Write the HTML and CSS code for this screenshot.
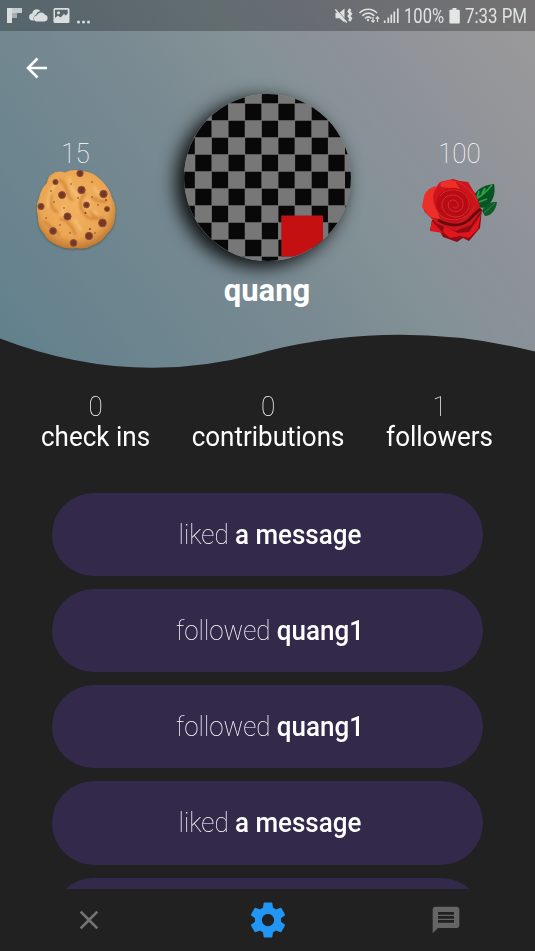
FILE: index.html
```html
<!DOCTYPE html>
<html lang="en">
<head>
<meta charset="utf-8">
<title>Profile</title>
<link rel="stylesheet" href="styles.css">
</head>
<body>
<div class="screen">
  <header class="hero">
    <div class="status">
      <svg class="status-left" width="96" height="31" viewBox="0 0 96 31" fill="#d9dedf">
        <path d="M7 8h5v15H7z"/><path d="M12 8h10v5H12z" opacity=".85"/><path d="M12 13h5v5h-5z" opacity=".6"/>
        <path d="M33 20.500a3.500 3.500 0 0 1-.7-7 4.500 4.500 0 0 1 8.200-2.300c-2.200.2-3.700 1.500-4.100 3.300-2 .5-3.300 2.400-2.500 6z"/>
        <path d="M37 21.500a3 3 0 0 1-.2-6 4.500 4.500 0 0 1 8.200-.7 3.400 3.400 0 0 1-.5 6.700z"/>
        <path fill-rule="evenodd" d="M55 8h13a1.500 1.500 0 0 1 1.500 1.500v12a1.500 1.500 0 0 1-1.500 1.500H55a1.500 1.500 0 0 1-1.500-1.500v-12A1.500 1.500 0 0 1 55 8zm0 1.700v8.300l3-2.500 2.500 2 3.500-3.500 1.800 1.500 1.900-2V9.700z"/>
        <circle cx="58.500" cy="12.800" r="1.500"/>
        <circle cx="78.500" cy="22" r="1.500"/><circle cx="83.500" cy="22" r="1.500"/><circle cx="88.500" cy="22" r="1.500"/>
      </svg>
      <div class="status-right">
        <svg width="66" height="31" viewBox="334 0 66 31" fill="none" stroke="#dfe1e1">
          <path d="M335.500 12.800h4l5-4.300v14l-5-4.300h-4z" fill="#dfe1e1" stroke="none"/>
          <path d="M336 8.500l11.500 13.500" stroke="#6b7073" stroke-width="1"/><path d="M335.300 9.500l11.500 13" stroke-width="1.500"/>
          <path d="M350.300 9l-1.500 2.500 2 2.300-2 2.300 2 2.300-1.500 2.600" stroke-width="2.600"/>
          <path d="M359.500 13c5-5 12.500-5 17.500 0M362.300 15.800c3.500-3.500 8.500-3.500 12 0M365 18.500c2-2 4.500-2 6.500 0" stroke-width="1.700"/>
          <circle cx="368" cy="20" r="1.200" fill="#dfe1e1" stroke="none"/>
          <path d="M373 17v5m-1.700-1.700l1.700 1.900 1.700-1.900M377.500 22v-5m-1.700 1.700l1.700-1.900 1.700 1.900" stroke-width="1.200"/>
          <path d="M384.700 20.500V23M388.300 17.500V23M391.300 14.500V23M394.300 11.500V23M397.800 8.500V23" stroke-width="1.700"/>
        </svg>
        <span class="battery-text">100%</span>
        <svg class="battery" width="11" height="31" viewBox="0 0 11 31" fill="#e4e6e6"><path d="M3.500 8h4v1.700H10q.8 0 .8.800v12q0 1-.8 1H1.200q-.8 0-.8-1v-12q0-.8.8-.8h2.300z"/></svg>
        <span class="clock">7:33 PM</span>
      </div>
    </div>

    <svg class="back" width="22" height="22" viewBox="0 0 22 22" fill="none" stroke="#fff" stroke-width="2.600"><path d="M21 11H2M11.500 1.500L2 11l9.500 9.500"/></svg>

    <div class="hero-row">
      <div class="score">
        <span class="score-value">15</span>
        <svg class="cookie" width="84" height="84" viewBox="34 168 84 84">
          <defs>
            <radialGradient id="dough" cx=".48" cy=".42" r=".6"><stop offset="0" stop-color="#f3b362"/><stop offset=".72" stop-color="#eba653"/><stop offset="1" stop-color="#bd7530"/></radialGradient>
            <filter id="soft"><feGaussianBlur stdDeviation="1.300"/></filter>
          </defs>
          <path d="M52 174q5-4 13-1.500 8-4 17-1.500 12 1 19 9 9 8 11 18 5 9 3 18 0 11-8 18-6 9-14 11-7 5-16 3-11 2-20-3-10-4-13-11-7-8-6-17-3-10 1-19 2-10 8-15 1-7 5-9z" fill="#45443c" opacity=".6" filter="url(#soft)" transform="translate(0 1)"/>
          <path d="M52 174q5-4 13-1.500 8-4 17-1.500 12 1 19 9 9 8 11 18 5 9 3 18 0 11-8 18-6 9-14 11-7 5-16 3-11 2-20-3-10-4-13-11-7-8-6-17-3-10 1-19 2-10 8-15 1-7 5-9z" fill="url(#dough)"/>
          <g fill="none" stroke="#c97d36" stroke-width="3" stroke-linecap="round" filter="url(#soft)" opacity=".65"><path d="M60 180c9 5 4 13 12 20M85 193q-8 10-2 19t13 6M51 195q-2 13 6 17M61 219q9 1 14 15M91 209q2 12 12 9M93 198q8 5 13 3M45 222l14 12"/></g>
          <g fill="none" stroke="#f7c984" stroke-width="3" stroke-linecap="round" filter="url(#soft)" opacity=".6"><path d="M55 185q-8 9-7 22M69 178q2 12 9 18M94 188l8 9M88 200q0 9 8 13M64 207q-5 10 4 9M75 220l6 10"/></g>
          <g fill="#743827" stroke="#945039" stroke-width="1"><circle cx="80" cy="173.500" r="3.200"/><circle cx="55.500" cy="182" r="2.600"/><circle cx="62" cy="195" r="3.500"/><circle cx="81.500" cy="190" r="3.700"/><circle cx="103.500" cy="194" r="3.700"/><circle cx="41" cy="206.500" r="3.100"/><circle cx="86.500" cy="205" r="2.900"/><circle cx="107" cy="209" r="2.500"/><circle cx="67.500" cy="216.500" r="3.600"/><circle cx="102.500" cy="223" r="3.900"/><circle cx="53" cy="231" r="3.400"/><circle cx="89" cy="236" r="3.700"/><circle cx="73.500" cy="243" r="3.400"/></g>
          <g fill="#7a4529"><circle cx="71" cy="184" r=".8"/><circle cx="92" cy="182" r=".8"/><circle cx="78" cy="198" r=".8"/><circle cx="51" cy="191" r=".8"/><circle cx="54" cy="202" r=".8"/><circle cx="92" cy="197" r=".8"/><circle cx="85.500" cy="213" r="1"/><circle cx="60" cy="225" r=".8"/><circle cx="70" cy="233" r=".8"/><circle cx="106" cy="200" r=".9"/><circle cx="98" cy="205" r=".8"/><circle cx="90" cy="229" r="1"/><circle cx="95" cy="233" r=".8"/><circle cx="46" cy="218" r=".8"/><circle cx="64" cy="208" r=".8"/></g>
        </svg>
      </div>

      <div class="person">
        <div class="avatar">
          <svg width="167" height="167" viewBox="184 93.500 167 167">
            <defs>
              <clipPath id="disc"><circle cx="267.500" cy="177" r="83.400"/></clipPath>
            </defs>
            <g clip-path="url(#disc)">
              <path d="M184 93h168v168H184z" fill="#777"/>
              <g fill="none" stroke="#080808" stroke-width="16.500" stroke-dasharray="16.200 17.080">
                <path d="M178.600 111.500H352M178.600 145.500H352M178.600 179.500H352M178.600 213.500H352M178.600 247.500H352"/>
                <path d="M162 94.500H352M162 128.500H352M162 162.500H352M162 196.500H352M162 230.500H352M162 264.500H352"/>
              </g>
              <path d="M281.300 215H323v41h-41.700z" fill="#c41010"/>
            </g>
          </svg>
        </div>
        <h1 class="name">quang</h1>
      </div>

      <div class="score">
        <span class="score-value">100</span>
        <svg class="rose" width="84" height="84" viewBox="418 168 84 84">
          <path d="M471 201c3-9 10-16 23-17 2 9-1 18-8 23-6 2-12-1-15-6z" fill="#075322"/><path d="M482 211c4-8 9-9 15-9-1 8-6 14-12 14z" fill="#0c5b28"/>
          <path d="M472 201q10-4 20-16M477 198l2-7M482 194l3-6M479 202l8-3" fill="none" stroke="#2da04b" stroke-width="1.800"/><path d="M484 213l11-10" stroke="#2b8742" stroke-width="1"/>
          <path d="M430 231l2-11 12-4 38-7-2 19-11 13-6-3-6 4-14-5-4-7z" fill="#8c0c13"/>
          <path d="M430 231l2-10 11 12zM444 226l14 7 11-1 12-18-3 15-9 9-9-2-10 2-7-6z" fill="#e0151d"/>
          <path d="M434 190l6-8 13-3 7 2 8 1 8 13 3 8 2 8-10 14-15 6-19-7-13-13-1-8z" fill="#cc141b"/>
          <path d="M424 196q3-9 14-10-8 9-3 20l5 13-10-2-8-10zM440 183q8-5 15-2l5 8-19-2z" fill="#ec2f29"/>
          <path d="M440 194q14-13 27 1 9 14-4 24-10 7-21-2-10-13-2-23z" fill="#b70c13"/>
          <path d="M455 181q15 5 22 20M436 210c9 15 31 12 38-3M440 196c5-8 21-9 27 1 6 9-1 20-11 20-12 0-19-13-10-20 7-5 19 0 17 9-2 7-11 7-14 2-3-6 3-10 7-7 5 4 1 9-3 6" fill="none" stroke="#dc2a30" stroke-width="1"/>
          <path d="M438 220q18 10 31 0 7-8 12-11" fill="none" stroke="#650a10" stroke-width="2.800"/>
        </svg>
      </div>
    </div>

    <svg class="wave" width="535" height="80" viewBox="0 311 535 80"><path d="M0 338.500Q133.750 390 267.500 351Q401.250 318.500 535 351.500V391H0z" fill="#212121"/></svg>
  </header>

  <section class="stats">
    <div class="stat"><span class="stat-value">0</span><span class="stat-label">check ins</span></div>
    <div class="stat"><span class="stat-value">0</span><span class="stat-label">contributions</span></div>
    <div class="stat"><span class="stat-value">1</span><span class="stat-label">followers</span></div>
  </section>

  <main class="feed">
    <div class="event"><p>liked <b>a message</b></p></div>
    <div class="event"><p>followed <b>quang1</b></p></div>
    <div class="event"><p>followed <b>quang1</b></p></div>
    <div class="event"><p>liked <b>a message</b></p></div>
    <div class="event"></div>
  </main>

  <nav class="tabs">
    <svg width="32" height="32" viewBox="0 0 24 24" fill="#737373"><path d="M19 6.410L17.590 5 12 10.590 6.410 5 5 6.410 10.590 12 5 17.590 6.410 19 12 13.410 17.590 19 19 17.590 13.410 12z"/></svg>
    <svg width="42" height="42" viewBox="0 0 24 24" fill="#2196f3"><path d="M19.430 12.980c.04-.32.070-.64.070-.98s-.03-.66-.07-.98l2.110-1.650c.19-.15.240-.42.120-.64l-2-3.460c-.12-.22-.39-.3-.61-.22l-2.490 1c-.52-.4-1.080-.73-1.690-.98l-.38-2.650C14.460 2.180 14.250 2 14 2h-4c-.25 0-.46.180-.49.420l-.38 2.650c-.61.250-1.170.59-1.690.98l-2.490-1c-.23-.09-.49 0-.61.220l-2 3.460c-.13.220-.07.490.12.640l2.110 1.650c-.04.320-.07.650-.07.980s.03.660.07.980l-2.110 1.650c-.19.150-.24.420-.12.640l2 3.460c.12.220.39.300.61.220l2.490-1c.52.400 1.080.73 1.690.98l.38 2.650c.03.240.24.420.49.420h4c.25 0 .46-.18.490-.42l.38-2.650c.61-.25 1.170-.59 1.690-.98l2.490 1c.23.090.49 0 .61-.22l2-3.460c.12-.22.070-.49-.12-.64l-2.110-1.650zM12 15.500c-1.930 0-3.500-1.570-3.500-3.500s1.570-3.500 3.500-3.500 3.500 1.570 3.500 3.500-1.570 3.500-3.500 3.500z"/></svg>
    <svg width="32" height="32" viewBox="0 0 24 24" fill="#656565"><path d="M20 2H4c-1.100 0-1.990.9-1.990 2L2 22l4-4h14c1.100 0 2-.9 2-2V4c0-1.100-.9-2-2-2zm-2 12H6v-2h12v2zm0-3H6V9h12v2zm0-3H6V6h12v2z"/></svg>
  </nav>
</div>
</body>
</html>
```
FILE: styles.css
```css
* { box-sizing: border-box; }
body {
  margin: 0;
  background: #212121;
  font-family: Roboto, "Liberation Sans", sans-serif;
  color: #fff;
}
svg { display: block; flex: none; }
.screen {
  width: 535px;
  height: 951px;
  display: flex;
  flex-direction: column;
  overflow: hidden;
}
.hero {
  position: relative;
  height: 391px;
  flex: none;
  background: linear-gradient(54deg, #5f808c 0%, #7a8a92 45%, #839296 60%, #8c9199 72%, #9c9a9a 100%);
}
.status {
  height: 31px;
  display: flex;
  justify-content: space-between;
  background: rgba(0, 0, 0, .25);
  font-size: 19.500px;
  line-height: 33px;
  color: #e1e3e3;
}
.status-right { display: flex; width: 201px; }
.battery-text { width: 40px; margin-left: 4px; white-space: nowrap; transform: scaleX(.85); transform-origin: left; }
.battery { margin-left: 5px; }
.clock { margin-left: 5px; white-space: nowrap; transform: scaleX(.865); transform-origin: left; }
.back { margin: 26px 0 0 26px; }
.hero-row {
  display: grid;
  grid-template-columns: 151px 1fr 151px;
  margin-top: 14px;
}
.score { display: flex; flex-direction: column; align-items: center; padding-top: 44px; }
.score-value { font-size: 26px; line-height: 32px; font-weight: 100; transform: translateY(1px) scaleY(1.050); }
.cookie, .rose { margin-top: -1px; }
.person { display: flex; flex-direction: column; align-items: center; }
.avatar {
  width: 167px;
  height: 167px;
  margin-top: .5px;
  border-radius: 50%;
  box-shadow: -7px 5px 18px 1px rgba(0, 0, 0, .9);
}
.name { margin: 12.500px 0 0; font-size: 31px; line-height: 36px; font-weight: 700; transform: translateX(-.5px); }
.wave { position: absolute; left: 0; bottom: 0; }
.stats {
  display: flex;
  justify-content: space-between;
  padding: 0 42px 0 41px;
  height: 101px;
  flex: none;
}
.stat { display: flex; flex-direction: column; align-items: center; }
.stat-value { font-size: 26px; line-height: 30px; font-weight: 100; transform: scaleY(1.070); }
.stat-label { font-size: 26px; line-height: 32px; transform: scaleY(1.050); }
.feed {
  flex: 1;
  min-height: 0;
  overflow: hidden;
  display: flex;
  flex-direction: column;
  gap: 13px;
  padding: .8px 52px 0;
}
.event {
  height: 83.200px;
  flex: none;
  border-radius: 42px;
  background: #33294b;
  display: flex;
  align-items: center;
  justify-content: center;
}
.event p { margin: 1px 0 0 5px; font-size: 26px; line-height: 32px; font-weight: 100; transform: scaleY(1.050); }
.event b { font-weight: 500; }
.tabs {
  height: 62px;
  flex: none;
  display: flex;
  justify-content: space-between;
  align-items: center;
  padding: 0 73px;
}
```
